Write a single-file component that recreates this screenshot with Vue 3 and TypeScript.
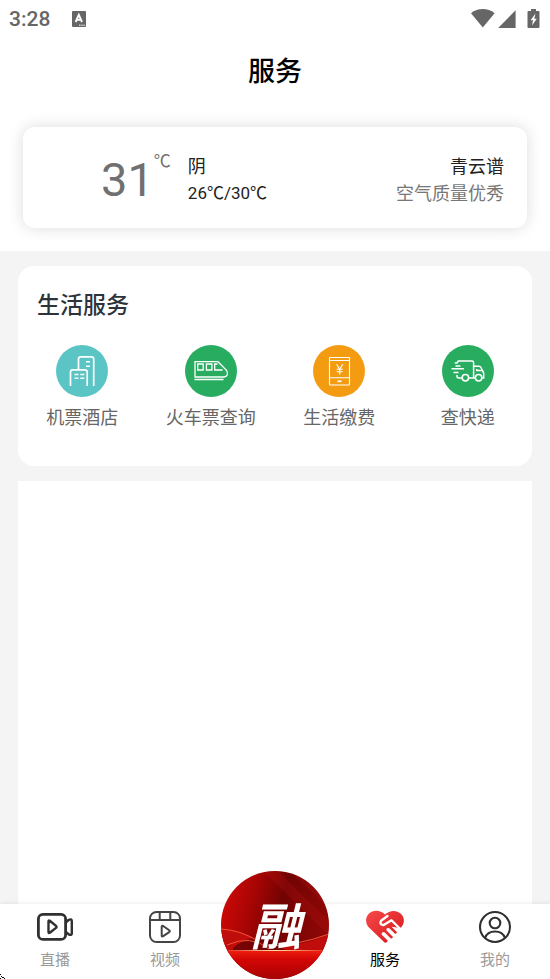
<script setup lang="ts">
type Icon = 'hotel' | 'train' | 'phone' | 'truck'

interface Service {
  label: string
  icon: Icon
}

const services: Service[] = [
  { label: '机票酒店', icon: 'hotel' },
  { label: '火车票查询', icon: 'train' },
  { label: '生活缴费', icon: 'phone' },
  { label: '查快递', icon: 'truck' },
]
</script>

<template>
  <div class="page">
    <header class="top">
      <div class="status">
        <span class="clock">3:28</span>
        <svg class="badge" width="14" height="16" viewBox="0 0 14 16">
          <rect width="14" height="16" rx="1" fill="#666" />
          <path d="M3.6 11 6.8 3.8 10 11M4.8 8.9h4" fill="none" stroke="#fff" stroke-width="1.9" />
          <path d="M7 14.2h6" stroke="#fff" stroke-width="1" stroke-dasharray="1.5 .7" />
        </svg>
        <svg class="signals" width="70" height="22" viewBox="0 0 70 22" fill="#666">
          <path d="M0 5.2C6.800-.4 16.800-.4 23.600 5.200L11.800 19.600Z" />
          <path d="M44.600 2.300V20H27.200Z" />
          <path d="M60 1h5v2h2.500q1 0 1 1v15q0 1-1 1h-10q-1 0-1-1V4q0-1 1-1H60Z" />
          <path d="M64.500 5.500 59.600 12.200h2.500L61 17.600l4.800-6.900h-2.500Z" fill="#fff" />
        </svg>
      </div>
      <h1>服务</h1>
      <section class="weather">
        <div class="now"><span class="degrees">31</span><span class="unit">℃</span></div>
        <div class="sky">
          <span>阴</span>
          <span class="range">26℃/30℃</span>
        </div>
        <div class="place">
          <span>青云谱</span>
          <span class="air">空气质量优秀</span>
        </div>
      </section>
    </header>

    <main>
      <section class="services">
        <h2>生活服务</h2>
        <div class="grid">
          <a v-for="item in services" :key="item.label" class="service" href="#">
            <svg class="round" :class="item.icon" width="52" height="52" viewBox="0 0 52 52">
              <circle class="disc" cx="26" cy="26" r="26" />
              <g v-if="item.icon === 'hotel'">
                <path stroke-width="1.700" d="M22.500 24V14q0-2.200 2.200-2.200H35.500q2.200 0 2.200 2.200V41M14.500 41V27q0-2.200 2.200-2.200H29q2.200 0 2.200 2.200V41" />
                <path stroke-width="1.600" d="M30 16.700h4M30 21.300h4M18.500 29.500h4M24.300 29.500h4M18.500 33.300h4M24.300 33.300h4" />
              </g>
              <g v-else-if="item.icon === 'train'" stroke-width="1.300">
                <path d="M10 16.700H33L41.500 25.300Q44.300 30.700 39 32H10Z" />
                <path d="M12.700 19h5.500v6h-5.500ZM21.400 19h5.500v6h-5.500ZM37.500 25H29.700V19H32.500M9.500 34.500H38.500" />
              </g>
              <g v-else-if="item.icon === 'phone'" stroke-width="1.100">
                <rect x="16.500" y="12.500" width="20" height="27.500" rx=".7" />
                <path d="M16.500 15.500h20M16.500 32.700h20" />
                <path stroke-width="1.700" d="M24.500 36.300h4" />
                <path d="M23.600 19.200 26.700 24.200 29.800 19.200M26.700 24.200V29.500M23.700 24.300h6M23.700 26.700h6" />
              </g>
              <g v-else stroke-width="1.500">
                <path d="M12.800 18H15L16.300 16H30Q31.600 16 31.600 17.500V33M13.500 21h5M9.500 23.700H22M11.500 27.400h5M15 30V31.500Q15 33 17 33H20M27 33h6" />
                <path d="M31.600 21.300H37Q38.300 21.300 39 22.700L41 26.500Q41.700 27.500 41.700 29V33H40M40 25.600H34.800V24" />
                <circle cx="23.400" cy="32.800" r="3.200" />
                <circle cx="36.600" cy="32.800" r="3.200" />
              </g>
            </svg>
            <span>{{ item.label }}</span>
          </a>
        </div>
      </section>
      <section class="blank"></section>
    </main>

    <nav>
      <a class="tab" href="#">
        <svg width="38" height="34" viewBox="0 0 38 34" fill="none" stroke="#303032" stroke-width="2.800" stroke-linejoin="round">
          <rect x="2.400" y="4.400" width="27.200" height="25" rx="4.500" />
          <path stroke-width="2.400" d="M12.500 11.500q0-1.400 1.300-.7L20 15.900q1.100 1 0 2L13.800 22.700q-1.300.7-1.300-.7ZM29.800 12.500 32.500 10Q35.800 8.300 35.800 11V23.500Q35.800 25.500 33 24.500L29.800 22" />
        </svg>
        <span>直播</span>
      </a>
      <a class="tab" href="#">
        <svg width="38" height="34" viewBox="0 0 38 34" fill="none" stroke="#454547" stroke-width="2" stroke-linejoin="round">
          <rect x="4" y="2" width="30" height="30" rx="6.500" />
          <path d="M4 10H34M13.700 2.500V10M24.300 2.500V10M15.700 16.800q0-1.600 1.500-.8l6 4.200q1.200.9 0 1.900l-6 4.100q-1.500.8-1.500-.8Z" />
        </svg>
        <span>视频</span>
      </a>
      <a class="center" href="#">
        <svg viewBox="0 0 108 108">
          <defs>
            <linearGradient id="sky" x1="0" y1="0" x2="1" y2=".25">
              <stop offset="0" stop-color="#d80a08" />
              <stop offset=".34" stop-color="#a60504" />
              <stop offset=".6" stop-color="#710303" />
              <stop offset="1" stop-color="#8c0706" />
            </linearGradient>
            <linearGradient id="floor" x1="0" y1="0" x2="0" y2="1">
              <stop offset="0" stop-color="#f02012" />
              <stop offset=".3" stop-color="#d40705" />
              <stop offset="1" stop-color="#a70303" />
            </linearGradient>
            <linearGradient id="horizon">
              <stop offset="0" stop-color="#d42013" />
              <stop offset=".5" stop-color="#ffe0a0" />
              <stop offset="1" stop-color="#e52b18" />
            </linearGradient>
            <clipPath id="ball"><circle cx="54" cy="54" r="54" /></clipPath>
          </defs>
          <g clip-path="url(#ball)">
            <rect width="108" height="108" fill="url(#sky)" />
            <path d="M69 0 108 38V14ZM42 0 108 65V50L57 0Z" fill="#c51b14" opacity=".2" />
            <path d="M0 58Q18 58 35 68T73 74 108 63V82H0Z" fill="#be0d0b" />
            <path d="M12 77Q35 57 61 77T108 72V81H12Z" fill="#650302" opacity=".8" />
            <path d="M0 58Q19 59 37 70M46 75Q75 75 108 63M6 74Q30 63 48 78" fill="none" stroke="#ee5434" stroke-width="1" />
            <rect y="79" width="108" height="29" fill="url(#floor)" />
            <rect y="79" width="108" height="1" fill="url(#horizon)" />
          </g>
          <text x="55" y="74" text-anchor="middle">融</text>
        </svg>
      </a>
      <a class="tab active" href="#">
        <svg width="40" height="34" viewBox="0 0 40 34">
          <defs>
            <linearGradient id="love" x1="0" y1="0" x2="1" y2="1">
              <stop offset="0" stop-color="#f54a49" />
              <stop offset="1" stop-color="#d8161c" />
            </linearGradient>
          </defs>
          <path d="M20 4.500C15-.5 7-.2 3.300 4.300-.2 8.700.6 14.300 4.500 18L18.500 31.500Q20.500 34 22.200 31.800L22.700 30.500 17 25Q16 23.500 17.300 22.400 18.600 21.600 19.800 22.600L25.600 28.300Q27.400 28.900 28 27L21.800 20.800Q20.800 19.300 22.100 18.300 23.300 17.500 24.600 18.500L29.800 23.600Q31.800 24 32 22.300L26.600 16.800 35.500 18C39.600 14 40 8.500 36.600 4.500 32.500-.2 25-.4 20 4.500Z" fill="url(#love)" />
          <path d="M22.500 6 16.300 10.500Q13.800 14.200 18.300 15.200L26.500 10.200 34.800 18.500" fill="none" stroke="#fff" stroke-width="2.300" stroke-linejoin="round" stroke-linecap="round" />
        </svg>
        <span>服务</span>
      </a>
      <a class="tab" href="#">
        <svg width="38" height="34" viewBox="0 0 38 34" fill="none" stroke="#303032" stroke-width="2.100">
          <circle cx="19" cy="17" r="15" />
          <circle cx="19" cy="13" r="5.300" />
          <path d="M9 28C12 19.300 26 19.300 29 28" />
        </svg>
        <span>我的</span>
      </a>
      <svg class="corner" width="5" height="5" viewBox="0 0 5 5"><path d="M0 0h1v1H0ZM1 2h1v1H1ZM2 3h2v1H2ZM0 4h1v1H0ZM4 4h1v1H4Z" /></svg>
    </nav>
  </div>
</template>

<style>
body {
  margin: 0;
}
</style>

<style scoped>
.page {
  display: flex;
  flex-direction: column;
  min-height: 100vh;
  background: #f4f4f4;
  font-family: Roboto, 'Noto Sans CJK SC', sans-serif;
  color: #222;
}
a {
  color: inherit;
  text-decoration: none;
}
.top {
  background: #fff;
  padding-bottom: 23px;
}
.status {
  display: flex;
  align-items: center;
  height: 38px;
  padding: 0 9px 0 9px;
  color: #666;
}
.clock {
  font-size: 21px;
  font-weight: 500;
}
.badge {
  margin-left: 22px;
}
.signals {
  margin-left: auto;
}
h1 {
  margin: 14px 0 35px;
  font-size: 27px;
  font-weight: 500;
  line-height: 40px;
  text-align: center;
  color: #000;
}
.weather {
  display: flex;
  align-items: center;
  box-sizing: border-box;
  min-height: 101px;
  margin: 0 23px;
  padding: 0 23px 0 78px;
  border-radius: 12px;
  background: #fff;
  box-shadow: 0 0 16px rgba(0, 0, 0, 0.14);
  font-size: 18px;
  line-height: 27px;
}
.now {
  display: flex;
  color: #707070;
}
.degrees {
  font-size: 47px;
  line-height: 54px;
  padding-top: 4px;
}
.unit {
  font-size: 17px;
  line-height: 24px;
}
.range {
  font-size: 17px;
}
.sky,
.place {
  display: flex;
  flex-direction: column;
  padding-top: 4px;
}
.sky {
  margin-left: 17px;
}
.place {
  margin-left: auto;
  text-align: right;
}
.air {
  color: #777;
}
main {
  flex: 1;
  display: flex;
  flex-direction: column;
  gap: 15px;
  padding: 15px 18px 0;
}
.services {
  padding: 21px 0 35px;
  border-radius: 16px;
  background: #fff;
}
h2 {
  margin: 0 0 20px;
  padding-left: 19px;
  font-size: 23px;
  font-weight: 500;
  line-height: 38px;
  color: #2c333b;
}
.grid {
  display: grid;
  grid-template-columns: repeat(4, 1fr);
}
.service {
  display: flex;
  flex-direction: column;
  align-items: center;
  gap: 7px;
  font-size: 18px;
  line-height: 27px;
  color: #666;
}
.round {
  fill: none;
  stroke: #fff;
}
.disc {
  stroke: none;
}
.hotel .disc {
  fill: #5bc5c5;
}
.train .disc,
.truck .disc {
  fill: #28ad60;
}
.phone .disc {
  fill: #f39c12;
}
.blank {
  flex: 1;
  background: #fff;
}
nav {
  position: relative;
  display: grid;
  grid-template-columns: repeat(5, 1fr);
  grid-template-rows: 75px;
  align-items: end;
  background: #fff;
  box-shadow: 0 0 5px rgba(0, 0, 0, 0.1);
}
.tab {
  display: flex;
  flex-direction: column;
  align-items: center;
  gap: 4px;
  padding-bottom: 7px;
  font-size: 15px;
  line-height: 24px;
  color: #999;
}
.active {
  color: #000;
}
.center {
  justify-self: center;
  width: 108px;
  height: 108px;
}
.center svg {
  display: block;
}
.center text {
  fill: #fff;
  font-family: 'Noto Sans CJK SC', sans-serif;
  font-size: 50px;
  font-weight: 700;
  font-style: italic;
}
.corner {
  position: absolute;
  left: 0;
  bottom: 0;
}
</style>
